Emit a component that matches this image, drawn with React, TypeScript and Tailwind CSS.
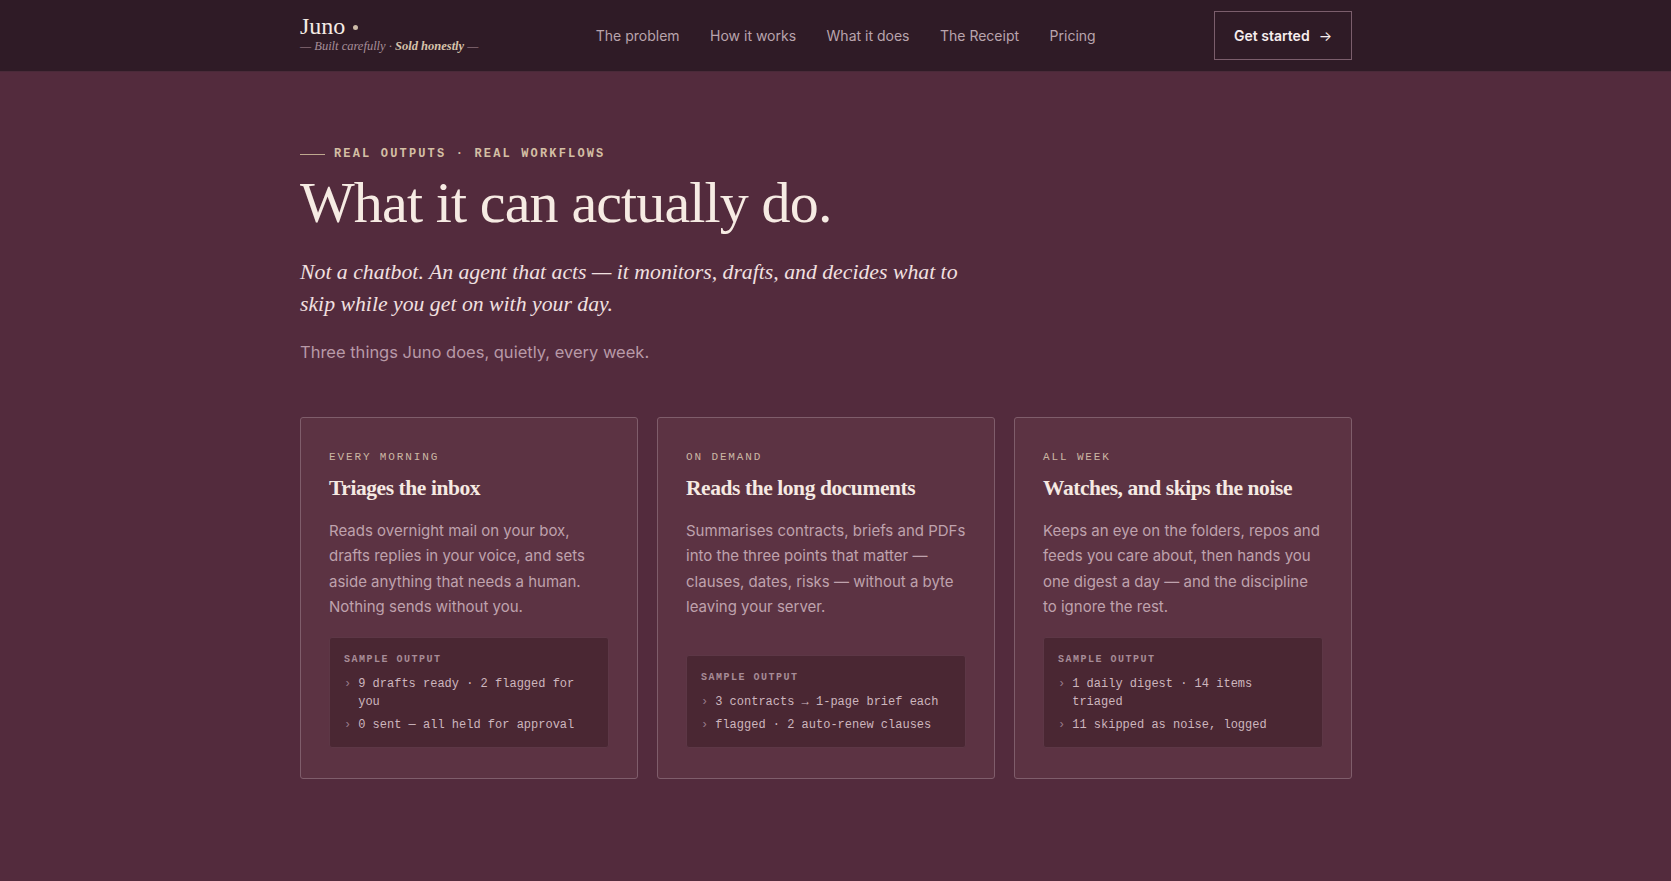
const serif = "font-['Liberation_Serif',Georgia,serif]";
const sans = "font-['Inter','Liberation_Sans',sans-serif]";
const mono = "font-['Liberation_Mono','DejaVu_Sans_Mono',monospace]";

const cards = [
  {
    when: "EVERY MORNING",
    title: "Triages the inbox",
    body: "Reads overnight mail on your box, drafts replies in your voice, and sets aside anything that needs a human. Nothing sends without you.",
    lines: ["9 drafts ready · 2 flagged for you", "0 sent — all held for approval"],
  },
  {
    when: "ON DEMAND",
    title: "Reads the long documents",
    body: "Summarises contracts, briefs and PDFs into the three points that matter — clauses, dates, risks — without a byte leaving your server.",
    lines: ["3 contracts → 1-page brief each", "flagged · 2 auto-renew clauses"],
  },
  {
    when: "ALL WEEK",
    title: "Watches, and skips the noise",
    body: "Keeps an eye on the folders, repos and feeds you care about, then hands you one digest a day — and the discipline to ignore the rest.",
    lines: ["1 daily digest · 14 items triaged", "11 skipped as noise, logged"],
  },
];

const links = ["The problem", "How it works", "What it does", "The Receipt", "Pricing"];

function Header() {
  return (
    <header className="h-[72px] border-b border-[#4a2a39] bg-[#2f1b26]">
      <div className="ml-[300px] flex h-full w-[1052px] items-center justify-between">
        <div className="-mt-[4px]">
          <div className="flex items-center gap-[8px]">
            <span className={`${serif} text-[24px] leading-[26px] text-[#f5ebe4]`}>Juno</span>
            <span className="mt-[3px] h-[5px] w-[5px] rounded-full bg-[#cdbba7]" />
          </div>
          <p className={`${serif} mt-[0px] text-[12.5px] italic leading-[15px] text-[#a78f99]`}>
            — Built carefully · <span className="font-bold text-[#d6c3ab]">Sold honestly</span> —
          </p>
        </div>
        <nav className={`${sans} ml-[-1px] flex items-center gap-[30.5px] text-[14px] text-[#b9a4ad]`}>
          {links.map((l) => (
            <a key={l} href="#">{l}</a>
          ))}
        </nav>
        <a
          href="#"
          className={`${sans} flex h-[49px] w-[138px] items-center justify-center gap-[9px] border border-[#7b5e6c] text-[14px] font-semibold text-[#f7eeee]`}
        >
          Get started <span className="font-normal">→</span>
        </a>
      </div>
    </header>
  );
}

function Card({ c }: { c: (typeof cards)[number] }) {
  return (
    <div className="flex flex-col rounded-[3px] border border-[#7f5d6b] bg-[#5c3343] px-[28px] pb-[30px] pt-[31px]">
      <p className={`${mono} text-[11px] leading-[16px] tracking-[0.17em] text-[#cbb7a3]`}>{c.when}</p>
      <h3 className={`${serif} mt-[8px] text-[21.5px] font-bold leading-[30px] tracking-[-0.02em] text-[#f5e9e2]`}>{c.title}</h3>
      <p className={`${sans} mt-[15px] text-[15px] leading-[25.3px] text-[#bfa2ad]`}>{c.body}</p>
      <div className="mt-auto pt-[18px]">
        <div className="rounded-[3px] border border-[#5d3746] bg-[#4a2733] px-[14px] pb-[13px] pt-[15px]">
          <p className={`${mono} text-[10px] font-bold leading-[14px] tracking-[0.15em] text-[#a78c97]`}>SAMPLE OUTPUT</p>
          <ul className={`${mono} mt-[8px] flex flex-col gap-[5px] text-[12px] leading-[18px] text-[#cdb6be]`}>
            {c.lines.map((l) => (
              <li key={l} className="flex gap-[7px]">
                <span className="text-[#98798a]">›</span>
                <span>{l}</span>
              </li>
            ))}
          </ul>
        </div>
      </div>
    </div>
  );
}

export default function App() {
  return (
    <div className="min-h-[881px] bg-[#532b3d]">
      <Header />
      <main className="ml-[300px] w-[1052px] pt-[73px]">
        <div className="flex items-center gap-[9px]">
          <span className="h-px w-[25px] bg-[#bfa88f]" />
          <span className={`${mono} text-[12px] font-bold tracking-[0.18em] text-[#d4bfa4]`}>
            REAL OUTPUTS · REAL WORKFLOWS
          </span>
        </div>
        <h1 className={`${serif} mt-[4px] text-[58px] leading-[72px] tracking-[-0.015em] text-[#f6ebe3]`}>What it can actually do.</h1>
        <p className={`${serif} mt-[17px] max-w-[680px] text-[21.75px] italic leading-[32px] text-[#f1e0e0]`}>
          Not a chatbot. An agent that acts — it monitors, drafts, and decides what to skip while you get on with your day.
        </p>
        <p className={`${sans} mt-[19px] text-[16.5px] leading-[26px] text-[#b899a7]`}>
          Three things Juno does, quietly, every week.
        </p>
        <div className="mt-[52px] grid grid-cols-3 gap-[19px]">
          {cards.map((c) => (
            <Card key={c.title} c={c} />
          ))}
        </div>
      </main>
    </div>
  );
}
